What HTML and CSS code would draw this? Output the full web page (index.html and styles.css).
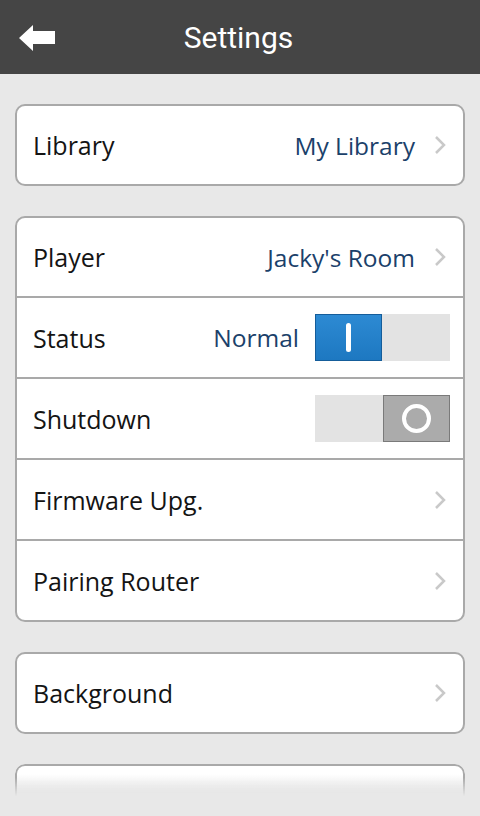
FILE: index.html
```html
<!DOCTYPE html>
<html lang="en">
<head>
  <meta charset="UTF-8" />
  <meta name="viewport" content="width=device-width, initial-scale=1.0" />
  <title>Settings</title>
  <link rel="stylesheet" href="styles.css">
</head>
<body>
  <div class="topbar">
    <svg class="back" width="40" height="30" viewBox="0 0 40 30">
      <polygon points="1,13 15,0 15,6 37,6 37,19 15,19 15,26" fill="#fff" />
    </svg>
    <h1>Settings</h1>
  </div>

  <div class="content">
    <div class="card">
      <div class="row">
        <span class="label">Library</span>
        <span class="value">My Library</span>
        <svg class="chev" width="14" height="20" viewBox="0 0 14 20"><path d="M3 2 L11 10 L3 18" /></svg>
      </div>
    </div>

    <div class="card">
      <div class="row">
        <span class="label">Player</span>
        <span class="value">Jacky's Room</span>
        <svg class="chev" width="14" height="20" viewBox="0 0 14 20"><path d="M3 2 L11 10 L3 18" /></svg>
      </div>
      <div class="row">
        <span class="label">Status</span>
        <span class="value">Normal</span>
        <div class="switch on"><div class="knob"><span class="bar"></span></div></div>
      </div>
      <div class="row">
        <span class="label">Shutdown</span>
        <div class="switch off"><div class="knob"><span class="ring"></span></div></div>
      </div>
      <div class="row">
        <span class="label">Firmware Upg.</span>
        <svg class="chev" width="14" height="20" viewBox="0 0 14 20"><path d="M3 2 L11 10 L3 18" /></svg>
      </div>
      <div class="row">
        <span class="label">Pairing Router</span>
        <svg class="chev" width="14" height="20" viewBox="0 0 14 20"><path d="M3 2 L11 10 L3 18" /></svg>
      </div>
    </div>

    <div class="card">
      <div class="row">
        <span class="label">Background</span>
        <svg class="chev" width="14" height="20" viewBox="0 0 14 20"><path d="M3 2 L11 10 L3 18" /></svg>
      </div>
    </div>

    <div class="card fade"></div>
  </div>
</body>
</html>
```

FILE: styles.css
```css
html, body {
  margin: 0;
  height: 816px;
  overflow: hidden;
}
body {
  background: #e8e8e8;
  font-family: "Open Sans", "Noto Sans", sans-serif;
}
.topbar {
  height: 74px;
  background: #454545;
  display: flex;
  align-items: center;
  justify-content: center;
  position: relative;
}
.back {
  position: absolute;
  left: 18px;
  top: 25px;
}
.topbar h1 {
  margin: 0 0 0 -3px;
  color: #fff;
  font-family: Roboto, sans-serif;
  font-weight: normal;
  font-size: 30px;
}
.content {
  padding: 30px 15px 0 15px;
  display: flex;
  flex-direction: column;
  gap: 30px;
}
.card {
  background: #fff;
  border: 2px solid #a9a9a9;
  border-radius: 10px;
}
.row {
  height: 79px;
  display: flex;
  align-items: center;
  padding: 0 16px 0 16px;
  border-top: 2px solid #a9a9a9;
}
.row:first-child {
  border-top: none;
  height: 78px;
}
.label {
  flex: 1;
  font-size: 25px;
  color: #141414;
}
.value {
  font-size: 24.5px;
  color: #1b416a;
}
.value + .chev {
  margin-left: 18px;
}
.chev {
  margin-left: 16px;
  fill: none;
  stroke: #c9c9c9;
  stroke-width: 2.5;
}
.switch {
  width: 135px;
  height: 47px;
  background: #e3e3e3;
  display: flex;
  margin-right: -3px;
}
.switch.on {
  margin-left: 16px;
}
.switch.off {
  justify-content: flex-end;
}
.knob {
  width: 67px;
  box-sizing: border-box;
  display: flex;
  align-items: center;
  justify-content: center;
}
.switch.on .knob {
  background: linear-gradient(#2d8ad3, #1d78c1);
  border: 1px solid #155d9a;
}
.switch.off .knob {
  background: #ababab;
  border: 1px solid #7a7a7a;
}
.bar {
  width: 5px;
  height: 29px;
  border-radius: 3px;
  background: #fff;
}
.ring {
  width: 21px;
  height: 21px;
  border: 4px solid #fff;
  border-radius: 50%;
}
.card.fade {
  height: 32px;
  border-bottom: none;
  border-radius: 10px 10px 0 0;
  background: linear-gradient(#fff 25%, #e8e8e8 80%);
  -webkit-mask-image: linear-gradient(#000 40%, transparent 95%);
  mask-image: linear-gradient(#000 40%, transparent 95%);
}
```
